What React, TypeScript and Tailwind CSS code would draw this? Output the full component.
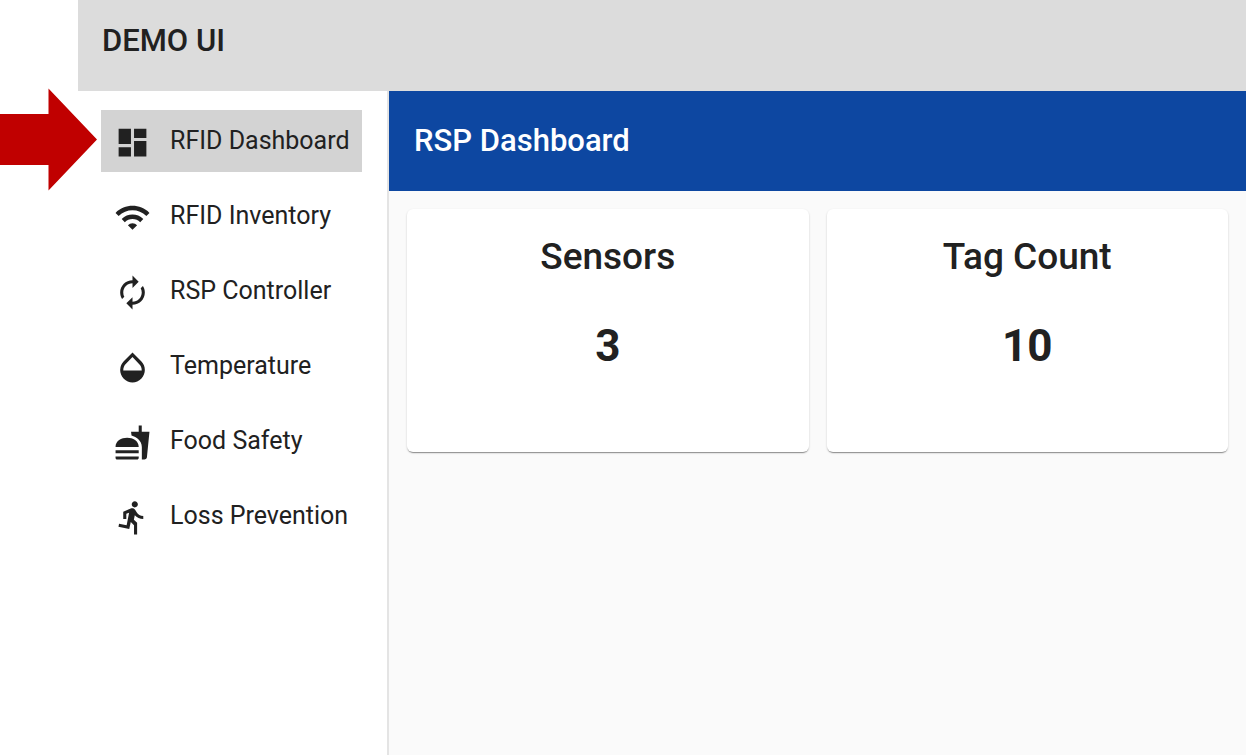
import type { IconType } from 'react-icons';
import { MdDashboard, MdWifi, MdAutorenew, MdOpacity, MdFastfood, MdDirectionsRun } from 'react-icons/md';

const items: { label: string; Icon: IconType }[] = [
  { label: 'RFID Dashboard', Icon: MdDashboard },
  { label: 'RFID Inventory', Icon: MdWifi },
  { label: 'RSP Controller', Icon: MdAutorenew },
  { label: 'Temperature', Icon: MdOpacity },
  { label: 'Food Safety', Icon: MdFastfood },
  { label: 'Loss Prevention', Icon: MdDirectionsRun },
];

const stats = [
  { label: 'Sensors', value: 3 },
  { label: 'Tag Count', value: 10 },
];

export default function App() {
  return (
    <div className="relative flex min-h-screen flex-col bg-white pl-[78px] font-['Roboto',sans-serif] text-[#212121]">
      <header className="flex h-[91px] items-start bg-[#dcdcdc] px-6 pt-[21px]">
        <h1 className="text-[31px] leading-10 font-medium">DEMO UI</h1>
      </header>
      <div className="flex grow">
        <nav className="w-[311px] shrink-0 border-r-2 border-[#e4e4e4] pt-[19px] pr-[25px] pl-[23px]">
          <ul className="flex flex-col gap-[13px]">
            {items.map(({ label, Icon }, i) => (
              <li key={label}>
                <a
                  href="#"
                  aria-current={i === 0 ? 'page' : undefined}
                  className="flex h-[62px] items-center gap-[19px] pl-[13px] whitespace-nowrap aria-[current=page]:bg-[#d3d3d3]"
                >
                  <Icon className="mt-[3px] size-[37px] shrink-0" />
                  <span className="text-[25px] leading-8">{label}</span>
                </a>
              </li>
            ))}
          </ul>
        </nav>
        <main className="min-w-0 grow bg-[#fafafa]">
          <div className="flex h-[100px] items-center bg-[#0d47a1] px-[25px] text-white">
            <h2 className="text-[31px] leading-10 font-medium">RSP Dashboard</h2>
          </div>
          <div className="grid grid-cols-2 gap-[18px] p-[18px]">
            {stats.map(({ label, value }) => (
              <section
                key={label}
                className="flex h-[243px] flex-col items-center gap-10 rounded-[6px] bg-white pt-[25px] shadow-[0_2px_1px_-1px_rgba(0,0,0,0.3),0_1px_2px_rgba(0,0,0,0.22)]"
              >
                <h3 className="text-[37px] leading-[46px] font-medium">{label}</h3>
                <p className="text-[44px] leading-[52px] font-bold">{value}</p>
              </section>
            ))}
          </div>
        </main>
      </div>
      <svg className="absolute top-[88px] left-0 h-[103px] w-[98px]" viewBox="0 0 98 103" aria-hidden="true">
        <path d="M0 26H48.500V0.500L97 51.500 48.500 102.500V77H0Z" fill="#c00000" />
      </svg>
    </div>
  );
}
